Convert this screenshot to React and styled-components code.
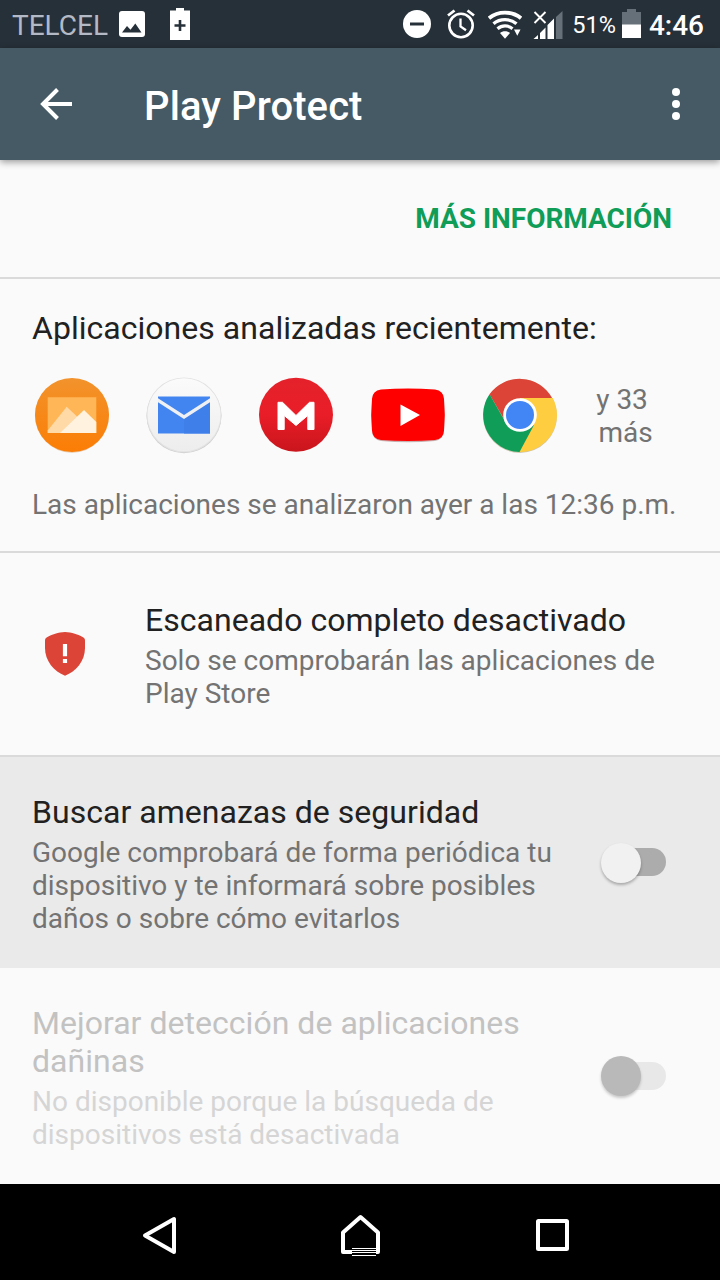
import React from "react";
import styled, { createGlobalStyle } from "styled-components";

const GlobalStyle = createGlobalStyle`
  * { box-sizing: border-box; }
  html, body { margin: 0; padding: 0; }
  body {
    font-family: Roboto, "Liberation Sans", sans-serif;
    background: #fafafa;
  }
  svg { display: block; flex: none; }
`;

const Screen = styled.div`
  width: 720px;
  height: 1280px;
  display: flex;
  flex-direction: column;
  overflow: hidden;
  background: #fafafa;
`;

const StatusBar = styled.header`
  height: 48px;
  flex: none;
  display: flex;
  align-items: center;
  justify-content: space-between;
  padding: 0 16px 0 12px;
  background: #263038;
  color: #fff;
`;

const StatusGroup = styled.div`
  display: flex;
  align-items: center;
`;

const StatusItem = styled.div`
  margin-left: ${(p) => p.$gap}px;
`;

const StatusText = styled.span`
  padding-top: 4px;
  font-size: 28px;
  line-height: 44px;
  white-space: nowrap;
`;

const Carrier = styled(StatusText)`
  width: 96px;
  color: #b4b9c6;
`;

const BatteryLevel = styled(StatusText)`
  width: 53px;
  padding-top: 2px;
  font-size: 23.5px;
  text-align: right;
`;

const Clock = styled(StatusText)`
  margin-left: 8px;
  font-weight: 500;
`;

const AppBar = styled.div`
  height: 112px;
  flex: none;
  display: flex;
  align-items: center;
  padding: 0 38px 0 40px;
  background: #455a64;
  color: #fff;
  box-shadow: 0 2px 7px rgba(0, 0, 0, 0.4);
  z-index: 1;
`;

const Title = styled.h1`
  flex: 1;
  margin: 6px 0 0 72px;
  font-size: 40px;
  line-height: 48px;
  font-weight: 500;
  letter-spacing: 0.1px;
`;

const LinkSection = styled.section`
  height: 119px;
  flex: none;
  padding: 42px 48px 0;
  border-bottom: 2px solid #dadada;
  text-align: right;
`;

const MoreLink = styled.a`
  font-size: 28px;
  line-height: 34px;
  font-weight: 700;
  letter-spacing: -0.04px;
  color: #0f9d58;
`;

const AppsSection = styled.section`
  height: 274px;
  flex: none;
  padding: 30px 32px 0;
  border-bottom: 2px solid #dadada;
`;

const Heading = styled.h2`
  margin: 0;
  font-size: 32px;
  line-height: 38px;
  font-weight: 400;
  letter-spacing: 0.03px;
  color: ${(p) => (p.$disabled ? "#c2c2c2" : "#212121")};
`;

const Detail = styled.p`
  margin: ${(p) => p.$top || 0}px 0 0;
  font-size: 28px;
  line-height: 33px;
  color: ${(p) => (p.$disabled ? "#d5d5d5" : "#737373")};
`;

const AppRow = styled.div`
  display: flex;
  align-items: center;
  gap: 32px;
  height: 80px;
  margin-top: 28px;
`;

const MoreApps = styled.div`
  width: 67px;
  margin-top: 2px;
  font-size: 28px;
  line-height: 33px;
  color: #737373;
  text-align: center;
  white-space: pre;
`;

const ScanSection = styled.section`
  height: 204px;
  flex: none;
  display: flex;
  align-items: flex-start;
  gap: 58px;
  padding: 48px 32px 0 43px;
  border-bottom: 2px solid #dadada;
`;

const ShieldSlot = styled.div`
  margin-top: 29px;
`;

const Setting = styled.section`
  height: ${(p) => p.$height}px;
  flex: none;
  display: flex;
  justify-content: space-between;
  align-items: center;
  padding: 3px 54px 0 32px;
  background: ${(p) => (p.$active ? "#eaeaea" : "#fafafa")};
`;

const SettingText = styled.div`
  width: ${(p) => p.$width || 540}px;
`;

const Track = styled.div`
  width: 56px;
  height: 28px;
  margin-bottom: 4px;
  border-radius: 14px;
  display: flex;
  align-items: center;
  flex: none;
  background: ${(p) => (p.$disabled ? "#e8e8e8" : "#acacac")};
`;

const Thumb = styled.div`
  width: 40px;
  height: 40px;
  flex: none;
  margin: 1px 0 0 -9px;
  border-radius: 50%;
  background: ${(p) => (p.$disabled ? "#b9b9b9" : "#f1f1f1")};
  box-shadow: 0 2px 3px rgba(0, 0, 0, ${(p) => (p.$disabled ? 0.2 : 0.28)});
`;

const NavBar = styled.nav`
  height: 96px;
  flex: none;
  display: flex;
  align-items: center;
  padding: 6px 0 0 136px;
  margin-top: auto;
  background: #000;
`;

const NavItem = styled.div`
  margin-left: ${(p) => p.$gap || 0}px;
`;

const Switch = ({ disabled }) => (
  <Track $disabled={disabled}>
    <Thumb $disabled={disabled} />
  </Track>
);

const ImageIcon = () => (
  <svg width="26" height="26" viewBox="0 0 26 26">
    <rect width="26" height="26" rx="3" fill="#fff" />
    <path d="M3 21.500l5-6.500 3.500 3.700 4.800-6.200L22.500 21.500z" fill="#263038" />
  </svg>
);

const BatterySaverIcon = () => (
  <svg width="20" height="32" viewBox="0 0 20 32">
    <path d="M0 2.500h6V0h8v2.500h6V32H0z" fill="#fff" />
    <path d="M4.500 17.500h11M10 12v11" stroke="#263038" strokeWidth="2.600" />
  </svg>
);

const DndIcon = () => (
  <svg width="28" height="28" viewBox="0 0 28 28">
    <circle cx="14" cy="14" r="14" fill="#fff" />
    <path d="M7 14h14" stroke="#263038" strokeWidth="3" />
  </svg>
);

const AlarmIcon = () => (
  <svg width="28" height="30" viewBox="0 0 28 30" fill="none" stroke="#fff">
    <circle cx="14" cy="16.500" r="11.700" strokeWidth="2.600" />
    <path d="M1 6.500L7.500 1.500M27 6.500l-6.500-5" strokeWidth="2.800" />
    <path d="M13.500 9.500v8l5.500 3.800" strokeWidth="2.300" />
  </svg>
);

const WifiIcon = () => (
  <svg width="34" height="30" viewBox="0 0 34 30" fill="none" stroke="#fff">
    <path d="M1 9.200C10 1.700 24 1.700 33 9.200" strokeWidth="3.800" />
    <path d="M5.500 14.700C12 9.300 22 9.300 28.500 14.700" strokeWidth="3.400" />
    <path d="M9.500 19.800C14 15.900 20 15.900 24.500 19.800" strokeWidth="3.200" />
    <path d="M12 24c2.500-2.500 7.500-2.500 10 0L17 29.800z" fill="#fff" stroke="none" />
    <path d="M26 20.500h6.500l-3.200 6.200z" fill="#fff" stroke="none" />
  </svg>
);

const SignalIcon = () => (
  <svg width="30" height="30" viewBox="0 0 30 30">
    <path d="M1.500 3l11 11M12.500 3l-11 11" stroke="#fff" strokeWidth="1.900" />
    <path d="M0.500 30L5 26v4zM7 30v-6l5.500-5.500V30zM14.500 30V16l6.500-6.500V30z" fill="#fff" />
    <path d="M23 30V8l6.500-6V30z" fill="#667078" />
  </svg>
);

const BatteryIcon = () => (
  <svg width="19" height="30" viewBox="0 0 19 30">
    <path d="M0 3h5V0h9v3h5v13H0z" fill="#667078" />
    <path d="M0 15.500h19V29H0z" fill="#fff" />
  </svg>
);

const BackArrow = () => (
  <svg width="32" height="32" viewBox="0 0 32 32">
    <path d="M17.500 1.500L3 16l14.500 14.500M2.500 16H32" fill="none" stroke="#fff" strokeWidth="4" />
  </svg>
);

const OverflowIcon = () => (
  <svg width="12" height="32" viewBox="0 0 12 32" fill="#fff">
    <circle cx="6" cy="4" r="4" />
    <circle cx="6" cy="16" r="4" />
    <circle cx="6" cy="28" r="4" />
  </svg>
);

const AlbumApp = () => (
  <svg width="80" height="80" viewBox="0 0 80 80">
    <defs>
      <linearGradient id="album" x1="0" y1="0" x2="0" y2="1">
        <stop offset="0" stopColor="#f2932c" />
        <stop offset="1" stopColor="#fb7d05" />
      </linearGradient>
    </defs>
    <circle cx="40" cy="40.700" r="37" fill="#d9a36c" opacity="0.600" />
    <circle cx="40" cy="40" r="37" fill="url(#album)" />
    <path d="M15.700 22.300h48.600V58H15.700z" fill="#ffb656" />
    <path d="M15.700 58v-2.500L34.700 31.700 54 50v8z" fill="#ffd9a6" />
    <path d="M28 58l24-23 12.300 12v11z" fill="#fff3e0" />
  </svg>
);

const MailApp = () => (
  <svg width="80" height="80" viewBox="0 0 80 80">
    <defs>
      <linearGradient id="mail" x1="0" y1="0" x2="0" y2="1">
        <stop offset="0" stopColor="#fbfbfb" />
        <stop offset="1" stopColor="#ededed" />
      </linearGradient>
    </defs>
    <circle cx="40" cy="40.700" r="37.500" fill="#cbcbcb" />
    <circle cx="40" cy="40" r="37.500" fill="#e2e2e2" />
    <circle cx="40" cy="39.800" r="36.500" fill="url(#mail)" />
    <path d="M14 21.500h52v37H14z" fill="#4285f0" />
    <path d="M40 42l26-17v33.500H40z" fill="#3f7fe9" />
    <path d="M14 23.200v4L40 44l26-16.800v-4L40 40z" fill="#eef0f4" />
  </svg>
);

const MegaApp = () => (
  <svg width="80" height="80" viewBox="0 0 80 80">
    <defs>
      <linearGradient id="mega" x1="0" y1="0" x2="0" y2="1">
        <stop offset="0" stopColor="#e4222b" />
        <stop offset="0.500" stopColor="#e91d27" />
        <stop offset="1" stopColor="#c9151d" />
      </linearGradient>
    </defs>
    <circle cx="40" cy="39.800" r="37" fill="url(#mega)" />
    <path d="M22 27.300h4.500L40 40.500l13.500-13.200H58v27.200h-6.200V40.500L40 50.500 28.200 40.500v14H22z" fill="#fff" stroke="#fff" strokeLinejoin="round" />
  </svg>
);

const VideoApp = () => (
  <svg width="80" height="80" viewBox="0 0 80 80">
    <path d="M13 15.500Q40 13.500 67 15.500 75.500 16.500 76 25 77.500 40.500 76 56 75.500 64.500 67 66 40 68.500 13 66 4.500 64.500 4 56 2.500 40.500 4 25 4.500 16.500 13 15.500z" fill="#c9b0b0" />
    <path d="M13 14.500Q40 12.500 67 14.500 75.500 15.500 76 24 77.500 39.800 76 55.500 75.500 64 67 65 40 67 13 65 4.500 64 4 55.500 2.500 39.800 4 24 4.500 15.500 13 14.500z" fill="#f00" />
    <path d="M32.500 29.500v21.500l19.500-11z" fill="#fff" />
  </svg>
);

const ChromeApp = () => (
  <svg width="80" height="80" viewBox="0 0 80 80">
    <circle cx="40" cy="40.900" r="37" fill="#cfc6ae" />
    <path d="M40 40L27 49 9.500 19.300A37 37 0 0 1 72 23H40z" fill="#db4437" />
    <path d="M40 23h32.800A37 37 0 0 1 39.500 77L54.500 48z" fill="#ffcd40" />
    <path d="M9.500 19.300L26 48l14 8 14-6-14.500 27A37 37 0 0 1 9.500 19.300z" fill="#0f9d58" />
    <circle cx="40" cy="40" r="16.800" fill="#fff" />
    <circle cx="40" cy="40" r="14" fill="#4285f4" />
  </svg>
);

const ShieldIcon = () => (
  <svg width="44" height="48" viewBox="0 0 44 48">
    <path d="M22 2C28.500 2.300 35.500 4.500 40 7.200 41.600 8.200 42 9.200 42 11V18C42 31 33 41.500 22 45.700 11 41.500 2 31 2 18V11C2 9.200 2.400 8.200 4 7.200 8.500 4.500 15.500 2.300 22 2z" fill="#db4437" />
    <path d="M19.900 14h4.200v12.200h-4.200zM19.900 29h4.200v4h-4.200z" fill="#fff" />
  </svg>
);

const NavBack = () => (
  <svg width="46" height="46" viewBox="0 0 46 46">
    <path d="M38 7v33L9 23.500z" fill="none" stroke="#fff" strokeWidth="4" strokeLinejoin="round" />
  </svg>
);

const NavHome = () => (
  <svg width="46" height="46" viewBox="0 0 46 46">
    <path d="M5 40V20.500L22.500 5 40 20.500V40z" fill="none" stroke="#fff" strokeWidth="4" strokeLinejoin="round" />
    <path d="M14 36h24v8H14z" fill="#000" />
    <path d="M14 36.500h24M14 38.500h24M14 40.500h24M14 43.500h24" stroke="#fff" />
  </svg>
);

const NavRecent = () => (
  <svg width="46" height="46" viewBox="0 0 46 46">
    <rect x="9" y="9" width="29" height="28" rx="0.500" fill="none" stroke="#fff" strokeWidth="4" strokeLinejoin="round" />
  </svg>
);

export default function App() {
  return (
    <>
      <GlobalStyle />
      <Screen>
        <StatusBar>
          <StatusGroup>
            <Carrier>TELCEL</Carrier>
            <StatusItem $gap={11}><ImageIcon /></StatusItem>
            <StatusItem $gap={25}><BatterySaverIcon /></StatusItem>
          </StatusGroup>
          <StatusGroup>
            <DndIcon />
            <StatusItem $gap={16}><AlarmIcon /></StatusItem>
            <StatusItem $gap={13}><WifiIcon /></StatusItem>
            <StatusItem $gap={11}><SignalIcon /></StatusItem>
            <BatteryLevel>51%</BatteryLevel>
            <StatusItem $gap={6}><BatteryIcon /></StatusItem>
            <Clock>4:46</Clock>
          </StatusGroup>
        </StatusBar>
        <AppBar>
          <BackArrow />
          <Title>Play Protect</Title>
          <OverflowIcon />
        </AppBar>
        <LinkSection>
          <MoreLink>MÁS INFORMACIÓN</MoreLink>
        </LinkSection>
        <AppsSection>
          <Heading>Aplicaciones analizadas recientemente:</Heading>
          <AppRow>
            <AlbumApp />
            <MailApp />
            <MegaApp />
            <VideoApp />
            <ChromeApp />
            <MoreApps>{"y 33 \nmás"}</MoreApps>
          </AppRow>
          <Detail $top={33}>Las aplicaciones se analizaron ayer a las 12:36 p.m.</Detail>
        </AppsSection>
        <ScanSection>
          <ShieldSlot>
            <ShieldIcon />
          </ShieldSlot>
          <div>
            <Heading>Escaneado completo desactivado</Heading>
            <Detail $top={5}>Solo se comprobarán las aplicaciones de Play Store</Detail>
          </div>
        </ScanSection>
        <Setting $height={211} $active>
          <SettingText>
            <Heading>Buscar amenazas de seguridad</Heading>
            <Detail $top={5}>
              Google comprobará de forma periódica tu dispositivo y te informará sobre posibles daños o sobre cómo evitarlos
            </Detail>
          </SettingText>
          <Switch />
        </Setting>
        <Setting $height={216}>
          <SettingText $width={520}>
            <Heading $disabled>Mejorar detección de aplicaciones dañinas</Heading>
            <Detail $top={5} $disabled>
              No disponible porque la búsqueda de dispositivos está desactivada
            </Detail>
          </SettingText>
          <Switch disabled />
        </Setting>
        <NavBar>
          <NavItem><NavBack /></NavItem>
          <NavItem $gap={156}><NavHome /></NavItem>
          <NavItem $gap={145}><NavRecent /></NavItem>
        </NavBar>
      </Screen>
    </>
  );
}
